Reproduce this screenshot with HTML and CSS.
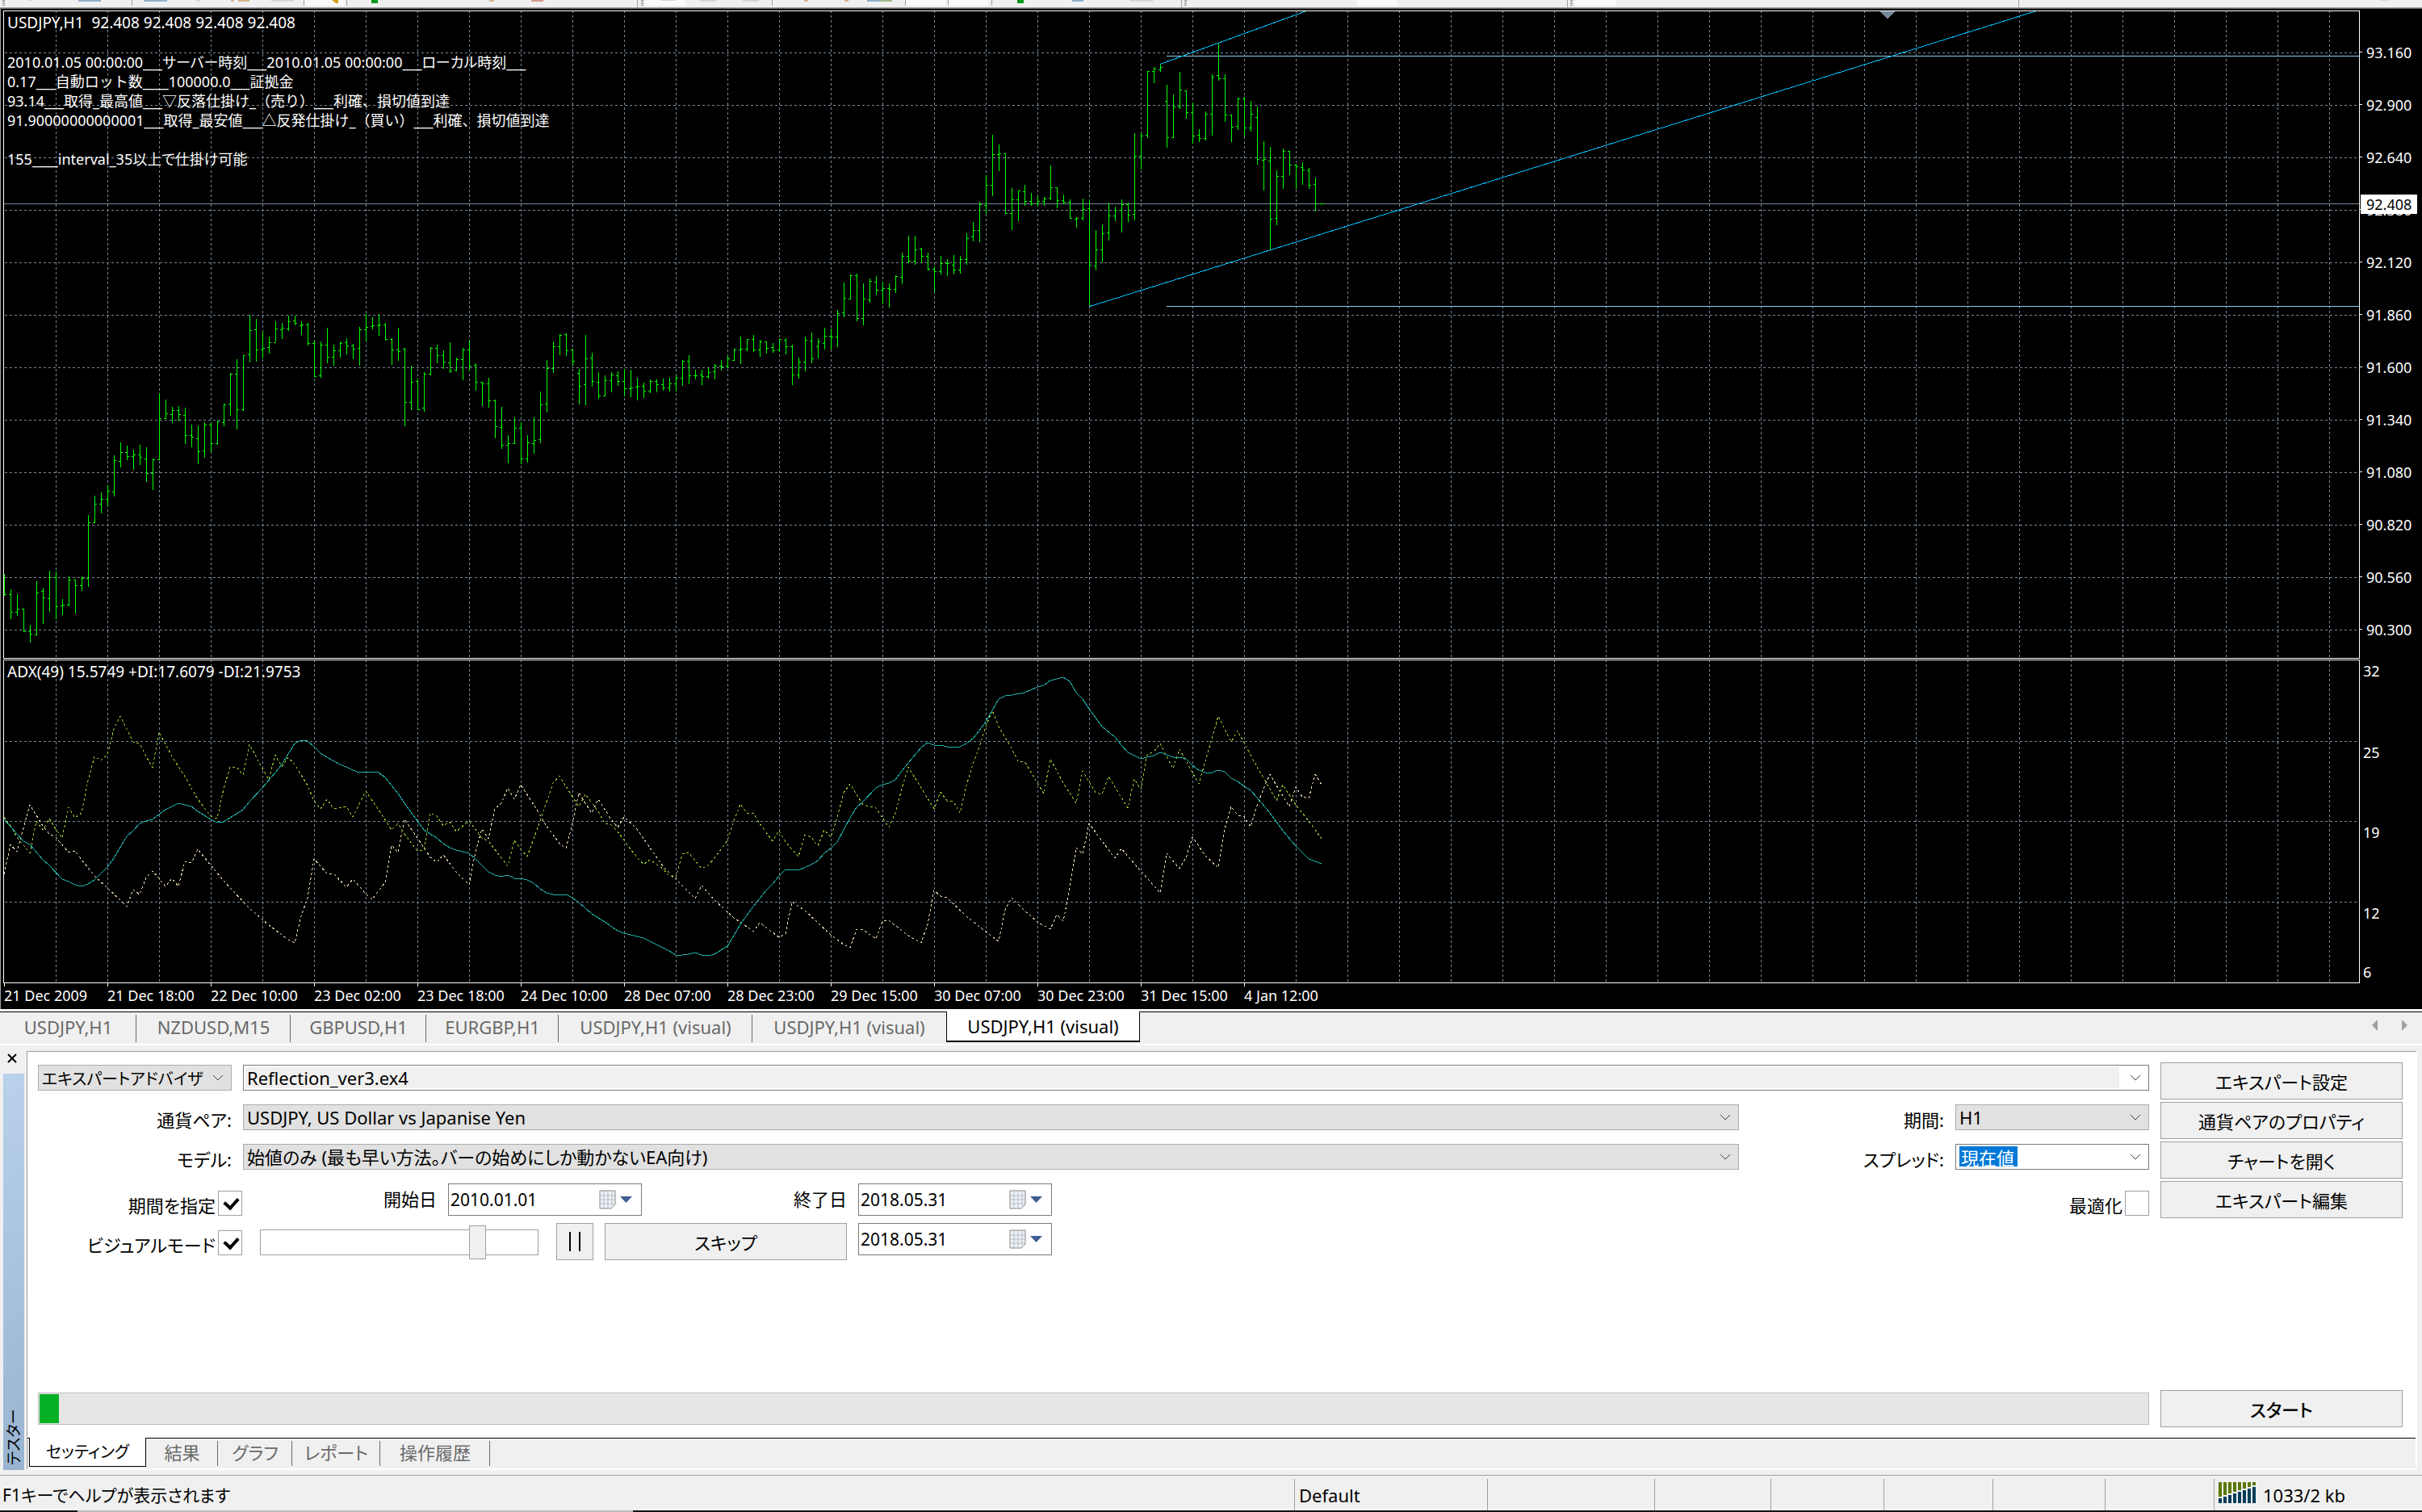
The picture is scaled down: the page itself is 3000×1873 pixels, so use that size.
FILE: index.html
```html
<!DOCTYPE html>
<html lang="ja">
<head>
<meta charset="utf-8">
<title>USDJPY,H1 (visual)</title>
<link rel="stylesheet" href="styles.css">
</head>
<body>
<header class="toolbar">
  <svg class="toolbar-art" width="100%" height="9" aria-hidden="true">
    <g fill="#fafafa"><rect x="377" y="0" width="50" height="7"/><rect x="799" y="0" width="50" height="7"/><rect x="1122" y="0" width="49" height="7"/><rect x="1175" y="0" width="49" height="7"/><rect x="1681" y="0" width="50" height="7"/><rect x="1951" y="0" width="50" height="7"/></g>
    <g fill="#a0a0a0"><rect x="163" width="1" height="7"/><rect x="376" width="1" height="7"/><rect x="429" width="1" height="7"/><rect x="789" width="1" height="9"/><rect x="956" width="1" height="7"/><rect x="1121" width="1" height="7"/><rect x="1174" width="1" height="7"/><rect x="1228" width="1" height="7"/><rect x="1463" width="1" height="9"/><rect x="1941" width="1" height="9"/><rect x="2500" width="1" height="9"/></g>
    <g stroke="#8a8a8a" stroke-width="3" stroke-dasharray="1 1"><path d="M4.500 0V7M795.500 0V7M1468.500 0V7M1946.500 0V7"/></g>
    <g fill="#8fb0cf"><rect x="97" width="28" height="2"/><rect x="178" width="29" height="2"/><rect x="1074" width="16" height="2"/><rect x="1328" width="14" height="2"/></g>
    <g fill="#d6d6d6"><rect x="34" width="6" height="1"/><rect x="243" width="5" height="2"/><rect x="336" width="28" height="2"/><rect x="819" width="18" height="1"/><rect x="867" width="20" height="2"/><rect x="920" width="20" height="2"/><rect x="1399" width="29" height="2"/><rect x="2950" width="10" height="1"/></g>
    <g fill="#d8b48a"><rect x="286" width="4" height="2"/><rect x="295" width="14" height="2"/><rect x="606" width="6" height="2"/><rect x="996" width="5" height="2"/><rect x="1046" width="5" height="2"/></g>
    <rect x="1090" width="15" height="2" fill="#9dbb8a"/><rect x="658" width="15" height="2" fill="#d79a8e"/>
    <path d="M411 0H419V4H416Z" fill="#d2a019"/>
    <g fill="#0a9a1e"><rect x="460" width="8" height="4"/><rect x="1260" width="8" height="4"/></g>
  </svg>
</header>

<main>
<section class="chart" aria-label="USDJPY,H1">
  <div class="pane pane-price">
    <svg id="price" width="100%" height="100%" shape-rendering="crispEdges" aria-hidden="true">
      <defs>
        <pattern id="cols" x="64" y="5" width="64" height="6" patternUnits="userSpaceOnUse"><rect width="1" height="3" fill="#778899"/></pattern>
        <pattern id="rows" x="1" y="51" width="6" height="65" patternUnits="userSpaceOnUse"><rect width="3" height="1" fill="#778899"/></pattern>
      </defs>
      <rect x="1" width="100%" height="100%" fill="url(#cols)"/>
      <rect width="100%" height="100%" fill="url(#rows)"/>
      <rect y="238" width="100%" height="1" fill="#778899"/>
      <g fill="#87ceeb"><rect x="1440" y="55" width="100%" height="1"/><rect x="1440" y="365" width="100%" height="1"/></g>
      <path id="bars" fill="none" stroke="#00ff00"/>
      <path d="M1432 65.500L1612 0M1345 365.500L2516 0" fill="none" stroke="#00bfff"/>
      <path d="M2323 0H2342L2333 10Z" fill="#778899"/>
    </svg>
    <div class="overlay">
      <p class="quote">USDJPY,H1&nbsp; 92.408 92.408 92.408 92.408</p>
      <p>2010.01.05 00:00:00___サーバー時刻___2010.01.05 00:00:00___ローカル時刻___</p>
      <p class="full">0.17___自動ロット数____100000.0___証拠金</p>
      <p class="full">93.14___取得_最高値___▽反落仕掛け_（売り）___利確、損切値到達</p>
      <p class="full">91.90000000000001___取得_最安値___△反発仕掛け_（買い）___利確、損切値到達</p>
      <p class="gap">155____interval_35以上で仕掛け可能</p>
    </div>
  </div>
  <div class="axis axis-price">
    <ul>
      <li>93.160</li><li>92.900</li><li>92.640</li><li>92.380</li><li>92.120</li><li>91.860</li>
      <li>91.600</li><li>91.340</li><li>91.080</li><li>90.820</li><li>90.560</li><li>90.300</li>
    </ul>
    <span class="price-tag">92.408</span>
  </div>
  <div class="pane pane-adx">
    <svg width="100%" height="100%" shape-rendering="crispEdges" aria-hidden="true">
      <rect x="1" width="100%" height="100%" fill="url(#cols)"/>
      <g stroke="#778899" stroke-dasharray="3 3"><line x1="1" x2="100%" y1="100.500" y2="100.500"/><line x1="1" x2="100%" y1="199.500" y2="199.500"/><line x1="1" x2="100%" y1="299.500" y2="299.500"/></g>
      <g fill="none">
        <polyline id="minus" stroke="#f5deb3" stroke-dasharray="3 3"/>
        <polyline id="plus" stroke="#9acd32" stroke-dasharray="3 3"/>
        <polyline id="adx" stroke="#20b2aa"/>
      </g>
    </svg>
    <div class="overlay"><p class="quote">ADX(49) 15.5749 +DI:17.6079 -DI:21.9753</p></div>
  </div>
  <div class="axis axis-adx"><ul><li>32</li><li>25</li><li>19</li><li>12</li><li>6</li></ul></div>
  <ol class="times">
    <li>21 Dec 2009</li><li>21 Dec 18:00</li><li>22 Dec 10:00</li><li>23 Dec 02:00</li><li>23 Dec 18:00</li><li>24 Dec 10:00</li><li>28 Dec 07:00</li><li>28 Dec 23:00</li><li>29 Dec 15:00</li><li>30 Dec 07:00</li><li>30 Dec 23:00</li><li>31 Dec 15:00</li><li>4 Jan 12:00</li>
  </ol>
</section>

<nav class="chart-tabs">
  <button type="button">USDJPY,H1</button><button type="button">NZDUSD,M15</button><button type="button">GBPUSD,H1</button><button type="button">EURGBP,H1</button><button type="button">USDJPY,H1 (visual)</button><button type="button">USDJPY,H1 (visual)</button><button type="button" class="active">USDJPY,H1 (visual)</button>
  <svg class="scrollers" width="44" height="14" aria-hidden="true"><path d="M7 0V14L0 7ZM37 0V14L44 7Z" fill="#a0a0a0"/></svg>
</nav>

<section class="tester">
  <aside class="grip">
    <button type="button" class="close" aria-label="閉じる"><svg width="12" height="12" aria-hidden="true"><path d="M1 1L11 11M11 1L1 11" stroke="#000" stroke-width="2"/></svg></button>
    <h2>テスター</h2>
  </aside>
  <div class="panel">
    <form class="sheet">
      <div class="settings">
        <div class="fields">
          <div class="row">
            <div class="combo kind w-std"><select aria-label="種類"><option>エキスパートアドバイザ</option></select><svg class="chev" viewBox="0 0 14 8"><path d="M1 1L7 7L13 1"/></svg></div>
            <div class="combo expert grow"><select aria-label="エキスパート"><option>Reflection_ver3.ex4</option></select><svg class="chev" viewBox="0 0 14 8"><path d="M1 1L7 7L13 1"/></svg></div>
          </div>
          <div class="row">
            <label class="w-std" for="symbol">通貨ペア:</label>
            <div class="combo grow"><select id="symbol"><option>USDJPY, US Dollar vs Japanise Yen</option></select><svg class="chev" viewBox="0 0 14 8"><path d="M1 1L7 7L13 1"/></svg></div>
            <label class="w-std" for="period">期間:</label>
            <div class="combo w-std"><select id="period"><option>H1</option></select><svg class="chev" viewBox="0 0 14 8"><path d="M1 1L7 7L13 1"/></svg></div>
          </div>
          <div class="row">
            <label class="w-std" for="model">モデル:</label>
            <div class="combo grow"><select id="model"><option>始値のみ (最も早い方法。バーの始めにしか動かないEA向け)</option></select><svg class="chev" viewBox="0 0 14 8"><path d="M1 1L7 7L13 1"/></svg></div>
            <label class="w-std" for="spread">スプレッド:</label>
            <div class="combo editable w-std"><input id="spread" type="text" value="現在値"><svg class="chev" viewBox="0 0 14 8"><path d="M1 1L7 7L13 1"/></svg></div>
          </div>
          <div class="row">
            <div class="check"><label for="usedate">期間を指定</label><input id="usedate" type="checkbox" checked></div>
            <label class="w-from" for="from">開始日</label>
            <div class="date"><input id="from" type="text" value="2010.01.01"><svg width="44" height="24" viewBox="0 0 44 24" aria-hidden="true"><path d="M1 1H20V18L15 23H1Z" fill="#eef2f6" stroke="#8c8484"/><path d="M1 7H20M1 12H20M1 17H20M6 1V23M11 1V23M16 1V20" stroke="#b4bcc6"/><path d="M26 8H41L33.500 16Z" fill="#3f5f94"/></svg></div>
            <label class="w-std" for="to">終了日</label>
            <div class="date"><input id="to" type="text" value="2018.05.31"><svg width="44" height="24" viewBox="0 0 44 24" aria-hidden="true"><path d="M1 1H20V18L15 23H1Z" fill="#eef2f6" stroke="#8c8484"/><path d="M1 7H20M1 12H20M1 17H20M6 1V23M11 1V23M16 1V20" stroke="#b4bcc6"/><path d="M26 8H41L33.500 16Z" fill="#3f5f94"/></svg></div>
            <div class="check right"><label for="opt">最適化</label><input id="opt" type="checkbox"></div>
          </div>
          <div class="row">
            <div class="check"><label for="visual">ビジュアルモード</label><input id="visual" type="checkbox" checked></div>
            <input class="speed" type="range" min="0" max="100" value="80" aria-label="速度">
            <button type="button" class="btn pause" aria-label="一時停止"><svg width="16" height="24" aria-hidden="true"><path d="M2 0V24M14 0V24" stroke="#000" stroke-width="2"/></svg></button>
            <button type="button" class="btn">スキップ</button>
            <div class="date"><input type="text" value="2018.05.31" aria-label="スキップ先"><svg width="44" height="24" viewBox="0 0 44 24" aria-hidden="true"><path d="M1 1H20V18L15 23H1Z" fill="#eef2f6" stroke="#8c8484"/><path d="M1 7H20M1 12H20M1 17H20M6 1V23M11 1V23M16 1V20" stroke="#b4bcc6"/><path d="M26 8H41L33.500 16Z" fill="#3f5f94"/></svg></div>
          </div>
        </div>
        <div class="actions">
          <button type="button" class="btn">エキスパート設定</button>
          <button type="button" class="btn">通貨ペアのプロパティ</button>
          <button type="button" class="btn">チャートを開く</button>
          <button type="button" class="btn">エキスパート編集</button>
        </div>
      </div>
      <div class="run">
        <div class="progress"><div class="bar"></div></div>
        <button type="button" class="btn start">スタート</button>
      </div>
    </form>
    <nav class="tester-tabs">
      <button type="button" class="active">セッティング</button><button type="button">結果</button><button type="button">グラフ</button><button type="button">レポート</button><button type="button">操作履歴</button>
    </nav>
  </div>
</section>
</main>

<footer class="status">
  <span class="help">F1キーでヘルプが表示されます</span>
  <span class="profile">Default</span><span></span><span></span><span></span><span></span><span></span><span></span>
  <span class="net"><svg width="46" height="26" viewBox="0 0 46 26" aria-hidden="true"><path fill="#5a7800" d="M0 0h4v18h-4zM6 0h4v16h-4zM12 0h4v14h-4zM18 0h4v12h-4zM24 0h4v10h-4zM30 0h4v8h-4zM36 0h4v6h-4zM42 0h4v4h-4z"/><path fill="#003c5a" d="M0 20h4v6h-4zM6 18h4v8h-4zM12 16h4v10h-4zM18 14h4v12h-4zM24 12h4v14h-4zM30 10h4v16h-4zM36 8h4v18h-4zM42 6h4v20h-4z"/></svg>1033/2 kb</span>
</footer>
<script src="chart.js"></script>
</body>
</html>
```
FILE: styles.css
```css
* { box-sizing: border-box; margin: 0; padding: 0; }
body {
  background: #f0f0f0;
  color: #000;
  font-family: "Noto Sans", "Noto Sans CJK JP", sans-serif;
  font-size: 22px;
  font-feature-settings: "palt";
}
button, input, select { font: inherit; font-feature-settings: inherit; color: inherit; }
ul, ol { list-style: none; }

.toolbar { height: 11px; border-bottom: 1px solid #696969; box-shadow: inset 0 -1px #a0a0a0; }
.toolbar-art { display: block; }

/* Chart window */
.chart {
  display: grid;
  grid-template-columns: 1fr 77px;
  grid-template-rows: 803px 401px 31px;
  row-gap: 1px;
  padding: 2px 0 0 3px;
  border-left: 1px solid #a0a0a0;
  background: #000;
  color: #fff;
  font-size: 18px;
  line-height: 24px;
}
.pane { position: relative; min-width: 0; border: 1px solid #fff; overflow: hidden; }
.pane svg { display: block; }
.overlay { position: absolute; top: 2px; left: 4px; white-space: nowrap; }
.overlay .quote { font-size: 19px; }
.overlay .full { font-feature-settings: normal; }
.pane-price .quote { margin-bottom: 25px; }
.overlay .gap { margin-top: 24px; }
.axis { position: relative; }
.axis-price ul { padding-top: 19px; }
.axis-price li { display: flex; align-items: center; gap: 5px; height: 65px; }
.axis-price li::before { content: ""; width: 3px; height: 1px; background: #fff; }
.axis-adx ul { display: grid; grid-template-rows: 101px 99px 100px 73px 24px; padding: 2px 0 0 4px; }
.price-tag { position: absolute; top: 228px; left: 1px; width: 70px; padding-left: 7px; background: #fff; color: #000; }
.times { display: flex; grid-column: 1 / -1; padding-left: 1px; margin-top: -1px; }
.times li { flex: none; width: 128px; padding-top: 3px; white-space: nowrap; background: linear-gradient(#fff, #fff) 0 0 / 1px 4px no-repeat; }

/* Chart tabs */
.chart-tabs {
  display: grid;
  grid-template-columns: 169px 191px 168px 164px repeat(3, 240px) 1fr;
  align-items: start;
  height: 45px;
  border-top: 3px solid #fff;
  border-bottom: 2px solid #fff;
  box-shadow: inset 0 1px #000;
}
.chart-tabs button {
  height: 38px;
  border: 0;
  background: linear-gradient(#696969, #696969) right 4px / 1px 34px no-repeat;
  color: #696969;
  line-height: 36px;
}
.chart-tabs button:nth-child(6) { background: none; }
.chart-tabs .active { border: 1px solid #000; border-top: 0; border-bottom-width: 2px; background: #fff; color: #000; }
.scrollers { margin: 10px 18px 0 auto; }

/* Strategy tester */
.tester { display: flex; padding: 7px 6px 6px 4px; }
.grip { display: flex; flex-direction: column; width: 26px; margin-right: 3px; }
.close { height: 18px; margin: 0 4px 10px 0; border: 0; background: none; line-height: 0; }
.grip h2 {
  flex: 1;
  padding-top: 6px;
  background: linear-gradient(#99b4d1, #b9d1ea);
  font-size: 19px;
  font-weight: 400;
  line-height: 26px;
  writing-mode: vertical-rl;
  text-orientation: sideways;
  transform: rotate(180deg);
}
.panel { flex: 1; min-width: 0; border: 1px solid #a0a0a0; border-right: 2px solid #fff; border-bottom: 2px solid #fff; }
.sheet { padding: 13px 16px 13px 13px; background: #fff; }
.settings, .run { display: flex; gap: 14px; }
.fields { flex: 1; min-width: 0; }
.row { display: flex; align-items: flex-start; gap: 14px; height: 49px; padding-top: 3px; }
.row label { line-height: 38px; text-align: right; white-space: nowrap; }
.grow { flex: 1; min-width: 0; }
.w-std { flex: none; width: 240px; }
.w-from { flex: none; width: 227px; }

.combo { position: relative; height: 32px; border: 1px solid #adadad; background: #e1e1e1; }
.combo select { appearance: none; width: 100%; height: 30px; padding: 0 36px 0 4px; border: 0; background: transparent; line-height: 30px; }
.combo.kind select { padding-right: 28px; font-size: 20px; }
.chev { position: absolute; top: 11px; right: 9px; width: 14px; height: 8px; fill: none; stroke: #404040; pointer-events: none; }
.expert { padding: 2px 36px 2px 2px; border-color: #7a7a7a; background: #fff; }
.combo.expert select { display: block; height: 26px; padding: 0 2px; background: #f0f0f0; line-height: 26px; }
.editable { border-color: #7a7a7a; background: #fff; padding: 2px 4px; }
.editable input { display: block; width: 72px; height: 25px; padding: 0 2px; border: 0; background: #0078d7; color: #fff; }

.check { display: flex; flex: none; align-items: flex-start; justify-content: flex-end; gap: 3px; width: 253px; padding-top: 9px; }
.check label { line-height: 36px; }
.check input {
  appearance: none;
  position: relative;
  width: 30px;
  height: 31px;
  border: 1px solid #a0a0a0;
  background: #fff;
}
.check input:checked::after {
  content: "";
  position: absolute;
  left: 7px;
  top: 7px;
  width: 13px;
  height: 8px;
  border: solid #000;
  border-width: 0 0 4px 4px;
  transform: rotate(-48deg);
}
.right { margin-left: auto; }

.date { display: flex; flex: none; align-items: center; width: 240px; height: 40px; padding: 0 8px 0 2px; border: 1px solid #7a7a7a; background: #fff; }
.date input { flex: 1; min-width: 0; border: 0; background: none; font-size: 21px; }

.speed { appearance: none; flex: none; width: 345px; height: 32px; margin: 8px 8px 0; border: 1px solid #a0a0a0; background: #fff; }
.speed::-webkit-slider-thumb { appearance: none; width: 21px; height: 42px; border: 1px solid #a0a0a0; background: #f0f0f0; }

.btn { width: 300px; height: 46px; border: 1px solid #a0a0a0; background: #f0f0f0; }
.pause { width: 46px; line-height: 0; }
.actions { display: flex; flex: none; flex-direction: column; gap: 3px; }
.start { font-weight: 500; }
.run { align-items: center; margin-top: 161px; }
.progress { flex: 1; height: 40px; padding: 1px; border: 1px solid #bcbcbc; background: #e6e6e6; }
.progress .bar { width: 24px; height: 36px; background: #06b025; }

.tester-tabs {
  display: grid;
  grid-template-columns: 145px 89px 92px 109px 136px;
  height: 38px;
  padding-left: 2px;
  background: linear-gradient(#000, #000) top / 100% 1px no-repeat;
}
.tester-tabs button {
  height: 36px;
  border: 0;
  background: linear-gradient(#696969, #696969) right 4px / 1px 31px no-repeat;
  color: #696969;
  line-height: 34px;
}
.tester-tabs .active { border: 1px solid #000; border-top: 0; background: #fff; color: #000; font-size: 20px; }

/* Status bar */
.status {
  display: grid;
  grid-template-columns: 1fr 239px 207px 144px 140px 135px 139px 135px 258px;
  height: 46px;
  padding-top: 4px;
  border-top: 1px solid #a0a0a0;
  background: linear-gradient(90deg, #141414 96px, #bcbcbc 96px, #bcbcbc 784px, #141414 784px) bottom / 100% 2px no-repeat;
  line-height: 40px;
}
.status span { height: 39px; padding-left: 5px; border-left: 1px solid #a0a0a0; white-space: nowrap; }
.status .help { padding-left: 3px; border: 0; font-size: 21px; }
.net { display: flex; align-items: center; gap: 9px; }
.net svg { margin-top: -6px; }
```
FILE: chart.js
```js
// Every candle is [high, low, close, open?] in thirds of a pixel below the
// segment's base row. Without an open the bar opens at the previous close.
const STEP = 8;
const segments = [
  { base: 366, bars: [
    [993,1076,1069,1069],[1050,1161,1135],[1068,1149,1123],[1123,1208,1207],[1182,1248,1216],[1020,1221,1063,1219],[1044,1179,1081,1057],[981,1134,1006,1084],[984,1161,1114],[1086,1146,1108,1111],
    [1002,1113,1015],[1015,1140,1036],[1002,1056,1008],[774,1041,802],[702,803,733],[690,768,715],[663,743,685],[552,705,571,688],[504,597,541,574],[516,570,556],
    [531,606,550],[513,588,559],[522,651,619,565],[565,681,568],[321,569,415],[345,416,398],[372,432,385,401],[369,426,401],[375,510,479,404],[438,522,484],
    [441,585,538,490],[429,561,439,535],[429,540,508],[423,513,427],[360,444,363,430],[246,405,250,361],[195,456,382],[180,387,181],[31,207,88,178],[45,204,160,85],
    [93,192,154],[111,174,133,151],[54,131,82],[60,120,79,85],[34,90,54,82],[34,70,61,52],[54,105,67,70],[60,144,136],[124,261,259],[129,264,142,256],
    [78,210,187],[141,219,163],[129,189,136],[117,177,145,133],[138,195,156],[75,219,85,154],[27,130,76],[39,84,70,73],[27,108,67],[60,126,121],
    [117,216,160],[78,201,165],[153,444,355,157],[219,384,280],[267,384,382,277],[243,390,250,376],[150,255,154],[141,210,181],[162,231,205],[132,246,238,208],
    [189,240,196,235],[153,273,160],[123,240,220],[210,312,280,217],[279,369,286],[264,375,349],[345,489,445],[372,528,514,448],[477,582,508],[411,509,451],
    [429,585,565],[477,579,505],[411,546,496,508],[315,507,363,493],[198,393,228,361],[129,246,148],[102,180,105],[99,183,162,103],[156,219,202,160],[231,363,295,247],
    [105,366,193,289],[171,297,277,190],[243,343,331,280],[255,333,274],[243,318,253],[240,294,277,256],[232,333,304],[234,336,301],[264,348,295,298],[282,339,313],
    [270,321,276],[270,318,289],[267,312,301],[264,315,286],[255,315,265],[198,294,202],[180,288,256],[234,270,256],[234,291,259,253],[228,267,244],
    [213,270,220,241],[198,237,222] ] },
  { base: 136, bars: [
    [875,920,883,910],[846,890,850,889],[801,903,847],[810,855,811],[795,858,850],[813,876,820],[819,864,844],[825,861,853,841],
    [810,857,811,850],[807,867,838,814],[831,981,943],[879,957,895],[801,930,814],[786,900,883,817],[807,882,820,838],[768,849,799,826],[771,850,802],[702,840,715],
    [600,729,658,712],[570,663,574,661],[567,744,733],[603,759,661],[585,675,595,664],[576,645,628,598],[597,681,622],[603,693,625],[573,639,577],[489,606,502,580],
    [426,528,520],[426,534,478],[471,528,502,475],[489,555,550],[540,636,559],[501,570,529],[513,576,529],[498,570,553,535],[501,567,514],[417,534,436],
    [375,447,406,430],[300,450,310],[201,347,238,313],[51,279,124],[87,186,121],[120,345,343],[249,405,292],[258,372,259],[237,315,298,262],[267,315,307],
    [280,318,298],[282,315,289],[165,294,247,286],[249,324,295],[273,309,301],[291,363,361],[357,396,361,364],[288,369,328],[291,688,535,325],[405,555,478,538],
    [384,525,418],[303,444,352,415],[318,372,331],[291,414,310],[303,375,349] ] },
  { base: -14, bars: [
    [495,819,580,796],[495,630,505],[264,513,265,502],[249,309,256],[238,267,250,259],[315,549,511,376],[351,513,397],[267,405,334],[336,441,418,337],[381,534,505],
    [480,528,514,502],[414,522,424],[276,504,286],[162,300,292,280],[276,453,427],[426,528,472],[363,483,367,469],[360,507,475],[375,489,424],[396,612,592,436],
    [525,708,592,595],[546,928,814,598],[633,837,655,811],[552,702,562],[564,651,613],[609,702,619],[603,687,631,622],[624,702,688,634],[660,786,757,685],[757,757,757] ] }
];
let d = "";
let x = 0;
for (const { base, bars } of segments) {
  const y = v => base + Math.floor(v / 3);
  let last = bars[0][3];
  for (const [high, low, close, open = last] of bars) {
    if (low > high) d += `M${x + 0.5} ${y(high)}V${y(low)}`;
    d += `M${x - 2} ${y(open) + 0.5}h3M${x} ${y(close) + 0.5}h3`;
    last = close;
    x += STEP;
  }
}
document.getElementById("bars").setAttribute("d", d);

// Indicator lines: bar index, level, bar index, level, ...
const lines = {
  adx: [0,645,3,725,4,738,6,795,7,817,9,866,10,877,11,888,12,895,13,885,14,870,16,823,17,788,19,708,20,686,21,660,22,651,23,646,24,626,25,608,26,596,27,586,28,591,29,598,30,615,31,631,32,646,33,658,34,653,35,640,37,610,38,580,40,528,42,472,43,440,44,403,45,363,46,352,47,353,48,374,49,399,50,413,52,441,53,449,54,462,55,471,56,469,57,469,58,472,59,488,61,550,62,585,64,650,65,684,67,713,68,735,69,750,70,760,72,770,73,793,75,841,76,853,77,857,78,853,79,864,80,865,81,869,82,882,83,904,84,918,85,925,87,925,88,935,89,953,91,995,93,1027,95,1060,96,1067,97,1075,99,1087,101,1110,103,1135,104,1150,105,1150,106,1147,107,1141,108,1150,109,1151,110,1147,112,1116,113,1078,114,1035,116,970,118,910,119,884,120,855,121,832,122,832,123,835,125,812,126,797,127,770,128,752,129,728,131,638,132,600,133,578,135,527,136,517,137,511,138,497,139,466,140,436,142,377,143,361,144,369,145,370,146,376,148,376,149,364,150,344,151,316,152,283,153,240,154,199,155,187,156,184,158,173,160,154,161,148,162,130,164,118,165,132,166,173,167,198,168,234,170,300,172,340,173,368,174,396,176,420,177,415,178,409,179,396,180,405,181,414,182,415,183,420,184,445,185,462,186,471,187,471,188,463,189,469,190,492,191,505,192,523,193,538,194,563,196,622,198,687,200,745,202,793,204,811],
  plus: [0,635,1,670,2,710,4,770,5,650,6,685,7,642,8,680,9,714,10,600,11,638,12,620,13,500,14,411,15,425,16,405,17,310,18,262,20,358,21,362,22,410,23,452,24,320,26,410,28,485,30,570,32,633,33,642,34,530,35,449,36,449,37,480,38,365,40,455,41,497,42,406,43,450,44,415,45,440,47,520,48,575,49,605,50,570,51,607,53,598,54,636,56,541,58,610,60,685,61,660,62,700,64,762,65,758,66,620,67,632,68,670,69,655,70,690,72,650,74,715,75,725,78,818,79,722,80,755,81,782,83,650,85,510,86,483,88,560,89,598,90,552,92,615,93,660,94,665,95,690,97,755,99,812,100,795,102,828,103,855,104,862,105,773,106,768,108,828,109,817,110,790,112,722,113,650,114,588,115,620,116,620,117,660,119,725,120,688,121,728,123,782,124,703,125,710,126,745,127,685,128,712,129,640,130,545,131,514,133,592,135,604,137,676,138,620,139,530,140,450,142,528,144,605,145,543,146,576,147,580,148,620,149,520,150,440,151,375,152,300,153,240,154,300,156,380,157,428,158,428,160,510,161,548,162,420,164,510,166,585,167,464,169,545,170,552,171,485,174,604,175,494,176,535,177,405,178,392,179,364,180,410,181,455,182,385,184,470,185,514,186,430,188,262,189,310,190,358,191,315,192,360,194,450,196,532,197,577,198,516,200,590,202,650,204,718],
  minus: [0,850,1,737,2,765,4,592,6,670,7,700,8,710,10,768,11,763,12,795,14,855,16,900,18,945,19,968,20,905,21,925,22,860,23,838,24,865,25,893,26,865,27,893,28,800,29,808,30,755,32,815,35,900,38,975,41,1038,44,1092,45,1105,46,1005,47,935,48,793,50,845,51,845,53,898,54,868,56,920,57,942,59,880,60,742,61,768,62,645,64,715,66,785,67,805,68,778,70,840,72,887,73,765,74,680,75,718,76,605,77,585,78,528,79,570,80,515,82,590,84,670,86,735,87,752,88,660,89,545,90,585,91,620,92,570,94,645,95,675,96,635,98,680,100,750,102,820,104,868,107,940,108,890,110,945,113,1010,115,1043,116,1062,117,1030,119,1065,120,1083,121,1072,122,950,124,985,128,1073,130,1110,131,1122,132,1053,133,1055,135,1090,136,1022,137,1020,140,1078,142,1104,143,1035,144,910,145,930,146,935,149,1005,152,1063,154,1097,155,980,156,935,158,985,160,1025,162,1053,163,1000,164,1022,165,900,166,750,167,775,168,660,170,725,172,788,173,752,175,810,178,890,179,918,180,772,182,828,183,790,184,710,186,780,188,825,189,680,190,597,191,630,192,635,193,672,194,595,195,530,196,476,197,520,199,597,200,525,201,562,202,566,203,478,204,515]
};
for (const [id, data] of Object.entries(lines)) {
  let points = "";
  for (let i = 0; i < data.length; i += 2) {
    points += `${data[i] * STEP},${Math.round(data[i + 1] / 3) - 18} `;
  }
  document.getElementById(id).setAttribute("points", points);
}
```
